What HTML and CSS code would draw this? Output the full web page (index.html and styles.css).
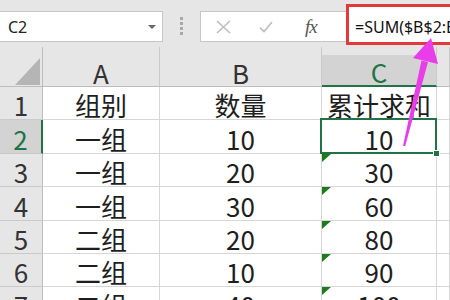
FILE: index.html
```html
<!DOCTYPE html>
<html lang="zh">
<head>
<meta charset="utf-8">
<link rel="stylesheet" href="styles.css">
</head>
<body>
<div class="toolbar">
  <div class="namebox"><span class="name">C2</span><span class="caret"></span></div>
  <div class="grip"><i></i><i></i><i></i><i></i></div>
  <div class="fxbox">
    <svg class="ico-x" width="15" height="14" viewBox="0 0 15 14"><path d="M1 1 L14 13 M14 1 L1 13" stroke="#bdbdbd" stroke-width="1.6" fill="none"/></svg>
    <svg class="ico-check" width="14" height="12" viewBox="0 0 14 12"><path d="M1 6.5 L5 10.5 L13 1" stroke="#bdbdbd" stroke-width="1.6" fill="none"/></svg>
    <span class="fx">fx</span>
  </div>
  <div class="formula">
    <div class="highlight"></div>
    <span class="ftext">=SUM($B$2:B2)</span>
  </div>
</div>
<div class="sheet">
  <div class="hd corner"><div class="tri"></div></div>
  <div class="hd col">A</div>
  <div class="hd col">B</div>
  <div class="hd col sel">C</div>
  <div class="hd col"></div>

  <div class="hd row">1</div>
  <div class="cell">组别</div>
  <div class="cell">数量</div>
  <div class="cell">累计求和</div>
  <div class="cell"></div>

  <div class="hd row sel">2</div>
  <div class="cell">一组</div>
  <div class="cell">10</div>
  <div class="cell active">10</div>
  <div class="cell"></div>

  <div class="hd row">3</div>
  <div class="cell">一组</div>
  <div class="cell">20</div>
  <div class="cell flag">30</div>
  <div class="cell"></div>

  <div class="hd row">4</div>
  <div class="cell">一组</div>
  <div class="cell">30</div>
  <div class="cell flag">60</div>
  <div class="cell"></div>

  <div class="hd row">5</div>
  <div class="cell">二组</div>
  <div class="cell">20</div>
  <div class="cell flag">80</div>
  <div class="cell"></div>

  <div class="hd row">6</div>
  <div class="cell">二组</div>
  <div class="cell">10</div>
  <div class="cell flag">90</div>
  <div class="cell"></div>

  <div class="hd row">7</div>
  <div class="cell">二组</div>
  <div class="cell">40</div>
  <div class="cell flag">100</div>
  <div class="cell"></div>
</div>
<svg class="arrow" width="450" height="300" viewBox="0 0 450 300">
  <polygon points="428,62 421.5,60.5 403,145.8 405.2,146.2" fill="#e93de9"/>
  <polygon points="431,38 413,58 438,64" fill="#e93de9"/>
</svg>
</body>
</html>
```

FILE: styles.css
```css
html, body {
  margin: 0;
  padding: 0;
}
body {
  width: 450px;
  height: 300px;
  overflow: hidden;
  background: #ffffff;
  position: relative;
  font-family: "Noto Sans CJK SC", "Noto Sans", sans-serif;
  color: #1e1e1e;
}
.toolbar {
  height: 47px;
  box-sizing: border-box;
  padding-top: 11px;
  background: #e6e6e6;
  display: flex;
  align-items: flex-start;
}
.namebox {
  flex: 0 0 164px;
  margin-left: -1px;
  height: 31px;
  box-sizing: border-box;
  background: #fff;
  border: 1px solid #c6c6c6;
  display: flex;
  align-items: center;
  padding-left: 8px;
  font-family: "Noto Sans", sans-serif;
  font-size: 16px;
  color: #222;
}
.caret {
  margin-left: auto;
  margin-right: 6px;
  width: 0;
  height: 0;
  border-left: 4.5px solid transparent;
  border-right: 4.5px solid transparent;
  border-top: 4px solid #666;
}
.grip {
  flex: 0 0 37px;
  display: flex;
  flex-direction: column;
  align-items: center;
  gap: 2px;
  padding-top: 6px;
}
.grip i {
  display: block;
  width: 3px;
  height: 3px;
  background: #a8a8a8;
}
.fxbox {
  flex: 0 0 141px;
  height: 31px;
  box-sizing: border-box;
  background: #fff;
  border: 1px solid #c6c6c6;
  display: flex;
  align-items: center;
}
.ico-x {
  margin-left: 15px;
}
.ico-check {
  margin-left: 28px;
}
.fx {
  margin-left: 32px;
  font-family: "Liberation Serif", serif;
  font-style: italic;
  font-size: 19px;
  color: #555;
  letter-spacing: -1px;
}
.formula {
  flex: 1 1 0;
  min-width: 0;
  height: 31px;
  box-sizing: border-box;
  margin-left: -1px;
  background: #fff;
  border-top: 1px solid #c6c6c6;
  border-bottom: 1px solid #c6c6c6;
  position: relative;
  display: flex;
  align-items: center;
}
.highlight {
  position: absolute;
  left: 6px;
  top: -8px;
  right: -10px;
  bottom: -4px;
  border: 3px solid #e03a3a;
  background: #fff;
}
.ftext {
  position: relative;
  padding-left: 15px;
  font-family: "Noto Sans", sans-serif;
  font-size: 16px;
  color: #111;
  white-space: nowrap;
}
.sheet {
  display: grid;
  grid-template-columns: 43px 117px 162px 115px 13px;
  grid-template-rows: 40px 33px 34px 33px 34px 33px 33px 33px;
}
.sheet > div {
  box-sizing: border-box;
  font-size: 26px;
  line-height: 1;
  display: flex;
  align-items: center;
  justify-content: center;
  white-space: nowrap;
}
.cell {
  border-right: 1px solid #d6d6d6;
  border-bottom: 1px solid #d6d6d6;
  padding-top: 4px;
  color: #1e1e1e;
}
.hd {
  background: #e6e6e6;
  color: #333;
}
.hd.col {
  border-right: 1px solid #cacaca;
  border-bottom: 1px solid #bdbdbd;
  padding-top: 12px;
}
.hd.col.sel {
  background: linear-gradient(#e6e6e6 8px, #d3d3d3 8px);
  color: #217346;
  border-bottom: 2px solid #217346;
}
.hd.row {
  border-right: 1px solid #bdbdbd;
  border-bottom: 1px solid #cacaca;
  padding-top: 4px;
}
.hd.row.sel {
  background: #d3d3d3;
  color: #217346;
  border-right: 2px solid #217346;
}
.hd.corner {
  border-right: 1px solid #bdbdbd;
  border-bottom: 1px solid #bdbdbd;
  align-items: flex-end;
  justify-content: flex-end;
}
.tri {
  width: 25px;
  height: 27px;
  margin-right: 2px;
  margin-bottom: 1px;
  background: #b5b5b5;
  clip-path: polygon(100% 0, 100% 100%, 0 100%);
}
.active {
  position: relative;
}
.active::after {
  content: "";
  position: absolute;
  left: -2px;
  top: -2px;
  right: -1px;
  bottom: -1px;
  border: 2px solid #217346;
}
.active::before {
  content: "";
  position: absolute;
  right: -4px;
  bottom: -4px;
  width: 5px;
  height: 5px;
  background: #217346;
  border: 1px solid #fff;
  z-index: 2;
}
.flag {
  position: relative;
}
.flag::before {
  content: "";
  position: absolute;
  left: 0;
  top: 0;
  width: 9px;
  height: 8px;
  background: #1d7a1d;
  clip-path: polygon(0 0, 100% 0, 0 100%);
}
.arrow {
  position: absolute;
  left: 0;
  top: 0;
  pointer-events: none;
}
```
